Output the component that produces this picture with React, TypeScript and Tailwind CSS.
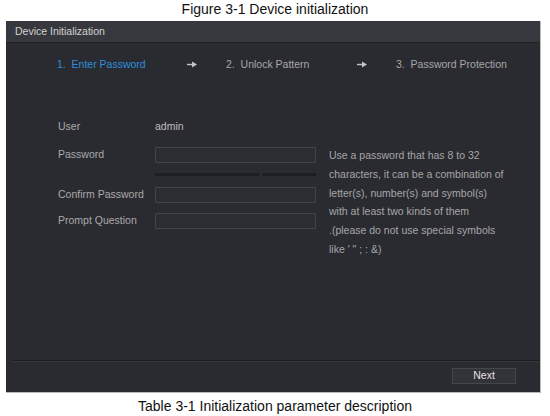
import type { ReactNode } from "react";

const HINT = [
  "Use a password that has 8 to 32",
  "characters, it can be a combination of",
  "letter(s), number(s) and symbol(s)",
  "with at least two kinds of them",
  ".(please do not use special symbols",
  "like ' \" ; : &)",
];

function Arrow() {
  return (
    <svg width="10" height="7" viewBox="0 0 10 7" className="block">
      <rect x="0" y="2.8" width="6" height="1.4" fill="#c4c4c4" />
      <polygon points="5,0.5 10,3.5 5,6.5" fill="#c4c4c4" />
    </svg>
  );
}

function Field({ label, children }: { label: string; children: ReactNode }) {
  return (
    <div className="flex h-[16px] items-center">
      <span className="w-[97px] text-[#a9a9ab]">{label}</span>
      {children}
    </div>
  );
}

function Input() {
  return <div className="h-[16px] w-[161px] rounded-[1px] border border-[#43444a] bg-[#2c2d32]" />;
}

export default function App() {
  return (
    <div
      className="flex h-[416px] w-[550px] flex-col bg-white"
      style={{ fontFamily: '"Liberation Sans", Arial, sans-serif' }}
    >
      <p className="h-[21px] pt-[1px] text-center text-[14px] leading-[17px] text-[#111]">
        Figure 3-1 Device initialization
      </p>

      <div className="ml-[6px] flex h-[372px] w-[535px] flex-col border-r border-b border-[#b9b9bb] bg-[#2a2b30] text-[10.5px]">
        {/* title bar */}
        <div className="flex h-[22px] items-center border-b border-[#202125] bg-[#37383d] pl-[9px] text-[#d2d2d4]">
          Device Initialization
        </div>

        {/* steps */}
        <div className="mt-[14px] flex h-[14px] items-center pl-[51px] leading-[14px]">
          <span className="w-[130px] text-[#2b8fdf]">1.&nbsp; Enter Password</span>
          <span className="flex w-[39px]">
            <Arrow />
          </span>
          <span className="w-[131px] text-[#a7a7a9]">2.&nbsp; Unlock Pattern</span>
          <span className="flex w-[39px]">
            <Arrow />
          </span>
          <span className="text-[#a7a7a9]">3.&nbsp; Password Protection</span>
        </div>

        {/* form + hint */}
        <div className="mt-[49px] flex pl-[52px]">
          <div className="flex w-[258px] flex-col">
            <div className="flex h-[14px] items-center">
              <span className="w-[97px] text-[#a9a9ab]">User</span>
              <span className="text-[#bdbdbf]">admin</span>
            </div>
            <div className="mt-[13px]">
              <Field label="Password">
                <Input />
              </Field>
            </div>
            <div className="ml-[97px] mt-[10px] flex h-[3px] w-[161px] gap-[4px]">
              <div className="h-full w-[104px] bg-[#1d1e22]" />
              <div className="h-full flex-1 bg-[#1d1e22]" />
            </div>
            <div className="mt-[11px]">
              <Field label="Confirm Password">
                <Input />
              </Field>
            </div>
            <div className="mt-[10px]">
              <Field label="Prompt Question">
                <Input />
              </Field>
            </div>
          </div>

          <div className="ml-[13px] mt-[26px] flex flex-col leading-[18.8px] text-[#a6a6a8]">
            {HINT.map((line) => (
              <span key={line}>{line}</span>
            ))}
          </div>
        </div>

        <div className="flex-1" />

        {/* footer */}
        <div className="ml-[7px] h-[2px] border-t border-b border-t-[#1d1e22] border-b-[#34353a]" />
        <div className="flex h-[30px] items-start justify-end pr-[24px] pt-[6px]">
          <div className="flex h-[16px] w-[64px] items-center justify-center border border-[#46474d] bg-[#323339] text-[#e2e2e4]">
            Next
          </div>
        </div>
      </div>

      <p className="mt-[5px] text-center text-[14px] leading-[17px] text-[#111]">
        Table 3-1 Initialization parameter description
      </p>
    </div>
  );
}
